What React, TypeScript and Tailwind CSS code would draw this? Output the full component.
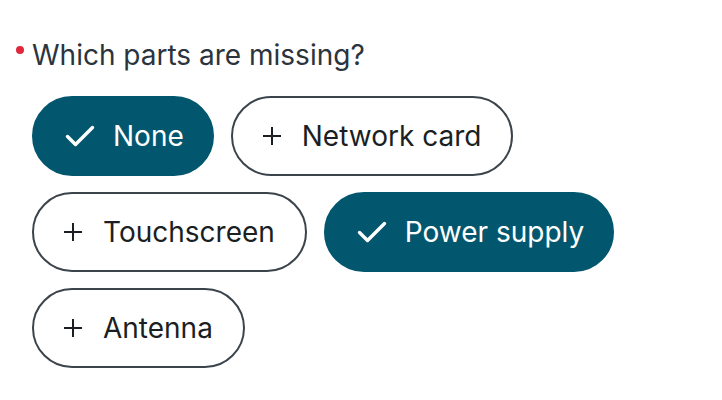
const options = [
  { label: "None", selected: true },
  { label: "Network card", selected: false },
  { label: "Touchscreen", selected: false },
  { label: "Power supply", selected: true },
  { label: "Antenna", selected: false },
];

function Chip({ label, selected }: { label: string; selected: boolean }) {
  return (
    <button
      className={
        selected
          ? "flex h-[80px] items-center gap-[18px] rounded-full border-2 border-[#02576e] bg-[#02576e] pl-[31px] pr-[28px] text-[28px] text-white"
          : "flex h-[80px] items-center gap-[21px] rounded-full border-2 border-[#3c444b] bg-white pl-[30px] pr-[30px] text-[28px] text-[#1b1f23]"
      }
    >
      {selected ? (
        <svg width="30" height="24" viewBox="0 0 30 24" fill="none">
          <path
            d="M2.5 12.5 L10.5 20.5 L27.5 3.5"
            stroke="currentColor"
            strokeWidth="3.4"
            strokeLinecap="round"
            strokeLinejoin="round"
          />
        </svg>
      ) : (
        <svg width="18" height="18" viewBox="0 0 18 18" fill="none">
          <path d="M9 0 V18 M0 9 H18" stroke="currentColor" strokeWidth="2" />
        </svg>
      )}
      <span>{label}</span>
    </button>
  );
}

export default function App() {
  return (
    <div className="min-h-screen bg-white px-[32px] pt-[38px] font-['Inter',sans-serif]">
      <div className="relative mb-[24px] text-[28px] leading-[34px] text-[#2b343c]">
        <span className="absolute -left-[16px] top-[8px] h-[8px] w-[8px] rounded-full bg-[#e0273b]" />
        Which parts are missing?
      </div>
      <div className="flex max-w-[620px] flex-wrap gap-x-[17px] gap-y-[16px]">
        {options.map((o) => (
          <Chip key={o.label} label={o.label} selected={o.selected} />
        ))}
      </div>
    </div>
  );
}
